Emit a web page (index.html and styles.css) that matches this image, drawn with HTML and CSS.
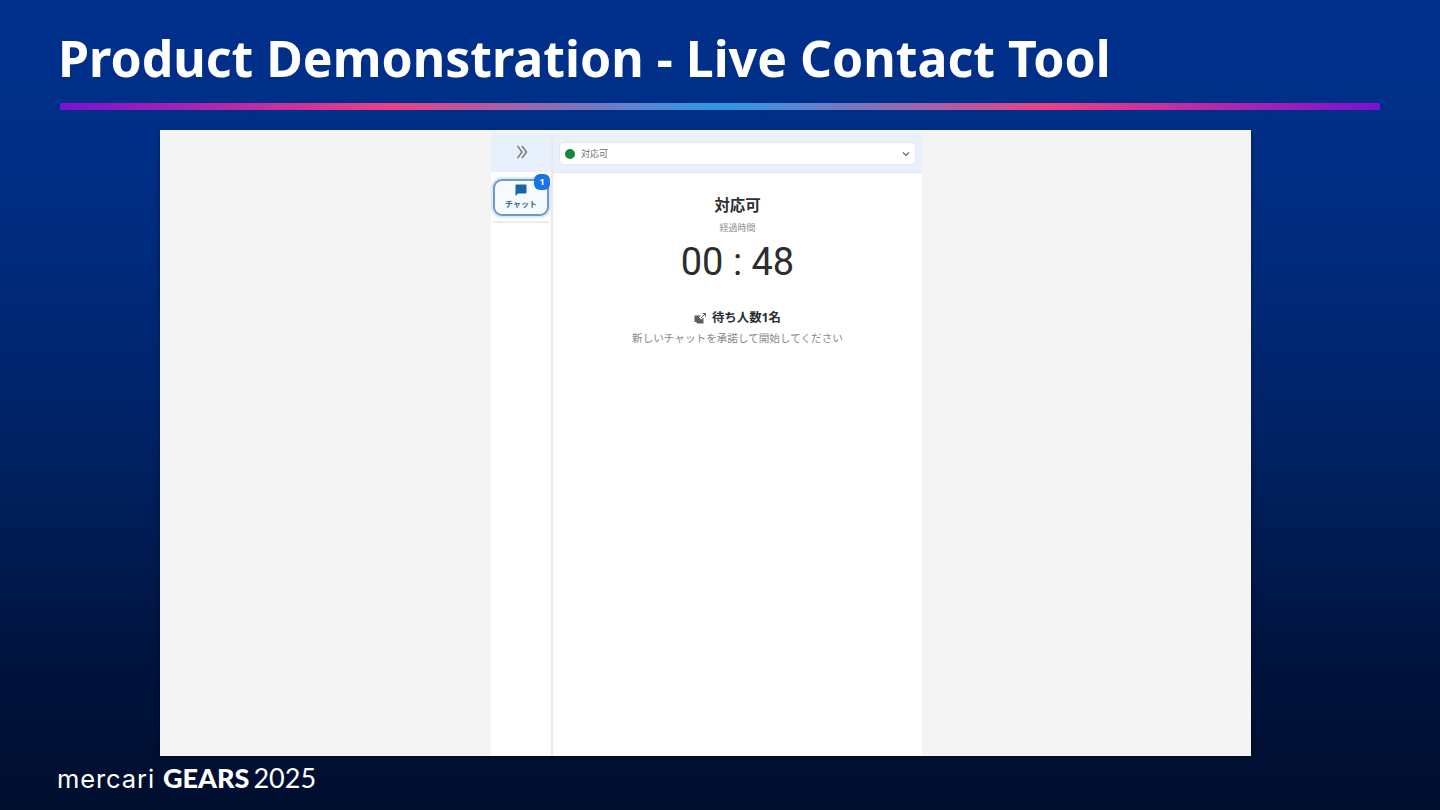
FILE: index.html
```html
<!DOCTYPE html>
<html lang="ja">
<head>
<meta charset="utf-8">
<title>Product Demonstration - Live Contact Tool</title>
<link rel="stylesheet" href="styles.css">
</head>
<body>
<div class="slide">
  <header class="slide-head">
    <h1 class="slide-title">Product Demonstration - Live Contact Tool</h1>
    <div class="rule"></div>
  </header>
  <main class="shot">
    <div class="app">
      <aside class="side">
        <div class="side-top">
          <svg class="expand" viewBox="0 0 12 14" width="12" height="14"><path d="M1.500 1 6 7l-4.500 6M6 1l4.500 6L6 13" fill="none" stroke="#767c86" stroke-width="1.500"/></svg>
        </div>
        <div class="side-nav">
          <div class="chat-btn">
            <svg class="chat-icon" viewBox="0 0 12 12" width="12" height="12"><path d="M1.500 0.500h9a1 1 0 0 1 1 1v7a1 1 0 0 1-1 1H3l-2.500 2.500v-10.500a1 1 0 0 1 1-1z" fill="#1565a8"/></svg>
            <span class="chat-label">チャット</span>
            <span class="badge">1</span>
          </div>
          <div class="side-sep"></div>
        </div>
      </aside>
      <section class="main">
        <div class="main-top">
          <div class="select">
            <span class="dot"></span>
            <span class="select-text">対応可</span>
            <svg class="caret" viewBox="0 0 8 6" width="8" height="6"><path d="M1 1.500 4 4.500 7 1.500" fill="none" stroke="#5f6670" stroke-width="1.200"/></svg>
          </div>
        </div>
        <div class="status">
          <div class="status-title">対応可</div>
          <div class="elapsed">経過時間</div>
          <div class="timer">00 : 48</div>
          <div class="waiting">
            <svg class="wait-icon" viewBox="0 0 12 11" width="12" height="11"><path d="M0.500 2.500h6.500L5 4.500l2.500 2L9.500 4.500v6H3.500l-1.500-1.500H0.500z" fill="#5a5d62"/><path d="M7 5 11.500 0.500M8.500 0.500h3v3" fill="none" stroke="#5a5d62" stroke-width="1"/></svg>
            <span>待ち人数1名</span>
          </div>
          <div class="hint">新しいチャットを承諾して開始してください</div>
        </div>
      </section>
    </div>
  </main>
  <footer class="brand">
    <span class="brand-mercari">mercari</span>
    <span class="brand-gears">GEARS</span>
    <span class="brand-year">2025</span>
  </footer>
</div>
</body>
</html>
```
FILE: styles.css
```css
* { box-sizing: border-box; }
html, body { margin: 0; padding: 0; }
body { width: 1440px; height: 810px; overflow: hidden; font-family: "Noto Sans", "Noto Sans CJK JP", sans-serif; }
.slide {
  width: 1440px; height: 810px;
  display: flex; flex-direction: column;
  background: linear-gradient(180deg, #00308c 0%, #002e86 20%, #00246a 50%, #001440 80%, #000e2e 100%);
}
.slide-head { padding: 25px 60px 0 58px; height: 130px; }
.slide-title { margin: 0; font-size: 50px; line-height: 66px; font-weight: 700; color: #fff; white-space: nowrap; }
.rule {
  margin-top: 12px; margin-left: 2px; height: 7px; width: 1320px;
  background: linear-gradient(90deg, #7a12d0 0%, #ee3f84 25%, #2c9ae6 50%, #ee3f84 75%, #7a12d0 100%);
}
.shot {
  margin-left: 160px; width: 1091px; height: 626px;
  background: #f4f4f4; box-shadow: 0 2px 6px rgba(0,0,0,.35);
  padding: 3px 0 0 331px;
}
.app { width: 431px; height: 623px; display: flex; background: #fff; }
.side { width: 62px; border-right: 2px solid #e6e9ee; display: flex; flex-direction: column; }
.side-top { height: 39px; background: #e8f0fb; display: flex; align-items: center; justify-content: center; padding: 0 0 2px 2px; }
.side-nav { padding: 7px 2px 0; display: flex; flex-direction: column; gap: 5px; }
.chat-btn {
  position: relative; height: 37px; width: 56px;
  border: 2px solid #6f9ac2; border-radius: 9px; background: #f7fafd;
  box-shadow: 0 0 0 2px #dbe8f6;
  display: flex; flex-direction: column; align-items: center; padding-top: 3px; gap: 3px;
}
.chat-label { font-size: 8px; line-height: 10px; font-weight: 700; color: #3a6a90; }
.badge {
  position: absolute; top: -7px; right: -3px; width: 16px; height: 16px; border-radius: 6px;
  background: #1a73e8; color: #fff; font: 700 9px/16px "Noto Sans", sans-serif; text-align: center;
}
.side-sep { height: 2px; background: #e9ebee; width: 56px; }
.main { flex: 1; display: flex; flex-direction: column; }
.main-top { height: 40px; background: #e8f0fb; padding: 10px 7px 0 7px; border-bottom: 1px solid #dfe7f2; }
.select {
  height: 21px; background: #fff; border-radius: 4px; display: flex; align-items: center;
  padding: 0 5px 0 5px; box-shadow: 0 0 0 1px #e3e9f2;
}
.dot { width: 10px; height: 10px; border-radius: 50%; background: #138a3a; margin-right: 6px; }
.select-text { font-size: 9px; color: #6a6e74; flex: 1; }
.status { display: flex; flex-direction: column; align-items: center; padding-top: 22px; color: #2b2d30; }
.status-title { font-size: 15.4px; line-height: 22px; font-weight: 700; }
.elapsed { margin-top: 5px; font-size: 9px; line-height: 12px; color: #8a8d92; }
.timer { margin-top: 5px; font-family: Roboto, sans-serif; font-size: 38px; line-height: 46px; color: #2b2d30; }
.waiting { margin-top: 24px; display: flex; align-items: center; gap: 6px; font-size: 12.4px; line-height: 18px; font-weight: 700; }
.hint { margin-top: 3px; font-size: 10.6px; line-height: 16px; color: #85888d; }
.brand { margin: 8px 0 0 57px; display: flex; align-items: baseline; color: #fff; height: 28px; line-height: 28px; }
.brand-mercari { font-family: "Inter", sans-serif; font-size: 25.500px; font-weight: 400; letter-spacing: .9px; }
.brand-gears { margin-left: 8px; font-family: "Lato", sans-serif; font-size: 27px; font-weight: 900; }
.brand-year { margin-left: 4px; font-family: "Lato", sans-serif; font-size: 27px; font-weight: 400; }
```
